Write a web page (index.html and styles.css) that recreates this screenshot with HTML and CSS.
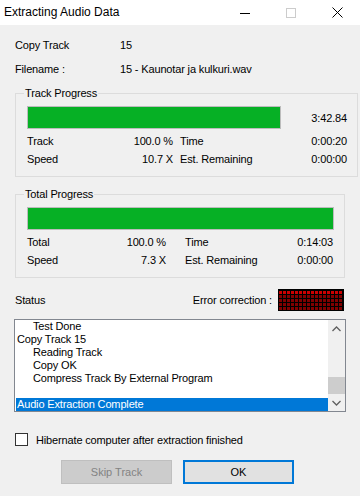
FILE: index.html
```html
<!DOCTYPE html>
<html lang="en">
<head>
    <meta charset="UTF-8">
    <meta name="viewport" content="width=device-width, initial-scale=1.0">
    <title>Extracting Audio Data</title>
    <link rel="stylesheet" href="styles.css">
</head>
<body>

    <div class="titlebar">
        <div class="title">Extracting Audio Data</div>
        <div class="controls">
            <div class="ctl"><svg width="10" height="10" viewBox="0 0 10 10"><line x1="0" y1="5.5" x2="10" y2="5.5" stroke="#000" stroke-width="1"/></svg></div>
            <div class="ctl"><svg width="10" height="10" viewBox="0 0 10 10"><rect x="0.5" y="0.5" width="9" height="9" fill="none" stroke="#cccccc" stroke-width="1"/></svg></div>
            <div class="ctl"><svg width="11" height="11" viewBox="0 0 11 11"><path d="M0.5 0.5 L10.5 10.5 M10.5 0.5 L0.5 10.5" stroke="#000" stroke-width="1"/></svg></div>
        </div>
    </div>

    <div class="dialog">
        <div class="info">
            <div class="info-row"><span class="info-label">Copy Track</span><span>15</span></div>
            <div class="info-row"><span class="info-label">Filename :</span><span>15 - Kaunotar ja kulkuri.wav</span></div>
        </div>

        <fieldset class="group">
            <legend>Track Progress</legend>
            <div class="bar-row">
                <div class="bar short"><div class="fill" style="width: 100%;"></div></div>
                <div class="bar-time">3:42.84</div>
            </div>
            <div class="stats">
                <span>Track</span><span class="num">100.0 %</span><span class="lbl2">Time</span><span class="num">0:00:20</span>
                <span>Speed</span><span class="num">10.7 X</span><span class="lbl2">Est. Remaining</span><span class="num">0:00:00</span>
            </div>
        </fieldset>

        <fieldset class="group second">
            <legend>Total Progress</legend>
            <div class="bar-row">
                <div class="bar"><div class="fill" style="width: 100%;"></div></div>
            </div>
            <div class="stats wide">
                <span>Total</span><span class="num">100.0 %</span><span class="lbl2">Time</span><span class="num">0:14:03</span>
                <span>Speed</span><span class="num">7.3 X</span><span class="lbl2">Est. Remaining</span><span class="num">0:00:00</span>
            </div>
        </fieldset>

        <div class="status-row">
            <span>Status</span>
            <div class="err">
                <span>Error correction :</span>
                <div class="leds" id="leds"></div>
            </div>
        </div>

        <div class="listbox">
            <div class="lines">
                <div class="line ind">Test Done</div>
                <div class="line">Copy Track 15</div>
                <div class="line ind">Reading Track</div>
                <div class="line ind">Copy OK</div>
                <div class="line ind">Compress Track By External Program</div>
                <div class="line"></div>
                <div class="line selected">Audio Extraction Complete</div>
            </div>
            <div class="scrollbar">
                <div class="arrow"><svg width="9" height="6" viewBox="0 0 9 6"><polyline points="0.5,5 4.5,1 8.5,5" fill="none" stroke="#606060" stroke-width="1.3"/></svg></div>
                <div class="track"><div class="thumb"></div></div>
                <div class="arrow"><svg width="9" height="6" viewBox="0 0 9 6"><polyline points="0.5,1 4.5,5 8.5,1" fill="none" stroke="#606060" stroke-width="1.3"/></svg></div>
            </div>
        </div>

        <label class="check">
            <span class="box"></span>
            <span>Hibernate computer after extraction finished</span>
        </label>

        <div class="buttons">
            <button class="btn disabled">Skip Track</button>
            <button class="btn default">OK</button>
        </div>
    </div>

    <script>
        // error correction meter: 16 x 5 cells, top row lit
        var leds = document.getElementById('leds');
        for (var r = 0; r < 5; r++) {
            for (var c = 0; c < 16; c++) {
                var cell = document.createElement('div');
                cell.className = r === 0 ? 'led on' : 'led';
                leds.appendChild(cell);
            }
        }
    </script>
</body>
</html>
```

FILE: styles.css
```css
body {
    margin: 0;
    width: 360px;
    height: 496px;
    background-color: #f0f0f0;
    font-family: "Liberation Sans", Arial, sans-serif;
    font-size: 11px;
    letter-spacing: -0.15px;
    color: #000;
    overflow: hidden;
}
.titlebar {
    height: 25px;
    background-color: #fff;
    display: flex;
    justify-content: space-between;
    align-items: center;
}
.title {
    font-size: 12px;
    letter-spacing: 0;
    padding-left: 4px;
    padding-bottom: 1px;
}
.controls {
    display: flex;
    height: 25px;
}
.ctl {
    width: 46px;
    display: flex;
    align-items: center;
    justify-content: center;
}
.ctl svg {
    display: block;
}
.dialog {
    padding-top: 8px;
}
.info {
    padding-left: 15px;
}
.info-row {
    height: 24px;
    line-height: 24px;
    display: flex;
}
.info-label {
    width: 105px;
}
.group {
    margin: 6px 15px 0 15px;
    padding: 6px 10px 8px 11px;
    border: 1px solid #dcdcdc;
}
.group.second {
    margin-top: 11px;
}
.group legend {
    padding: 0 1px;
    margin-left: -3px;
    line-height: 13px;
}
.bar-row {
    display: flex;
    align-items: center;
    height: 23px;
}
.bar {
    flex: 1;
    height: 23px;
    box-sizing: border-box;
    border: 1px solid #bcbcbc;
    background-color: #e6e6e6;
}
.bar.short {
    flex: none;
    width: 254px;
}
.fill {
    height: 100%;
    background-color: #06b025;
}
.bar-time {
    flex: 1;
    text-align: right;
}
.stats {
    margin-top: 3px;
    display: grid;
    grid-template-columns: 79px 60px 100px 60px;
    column-gap: 7px;
    line-height: 18px;
    white-space: nowrap;
}
.stats.wide {
    grid-template-columns: 79px 60px 107px 60px;
    column-gap: 0;
}
.stats.wide .lbl2 {
    padding-left: 19px;
}
.stats .num {
    text-align: right;
}
.status-row {
    margin: 11px 16px 0 15px;
    height: 22px;
    display: flex;
    justify-content: space-between;
    align-items: center;
}
.err {
    display: flex;
    align-items: center;
    gap: 6px;
}
.leds {
    display: grid;
    grid-template-columns: repeat(16, 3px);
    grid-auto-rows: 3px;
    gap: 1px;
    padding: 2px 2px 1px 1px;
    background-color: #000;
}
.led {
    background-color: #800000;
}
.led.on {
    background-color: #cc0000;
}
.listbox {
    margin: 8px 14px 0 14px;
    height: 93px;
    box-sizing: border-box;
    border: 1px solid #828790;
    background-color: #fff;
    display: flex;
}
.lines {
    flex: 1;
    padding-left: 1px;
}
.line {
    height: 13px;
    line-height: 13px;
    padding-left: 1px;
    white-space: nowrap;
}
.line.ind {
    padding-left: 17px;
}
.line.selected {
    background-color: #0078d7;
    color: #fff;
}
.scrollbar {
    width: 17px;
    background-color: #f0f0f0;
    display: flex;
    flex-direction: column;
}
.arrow {
    height: 17px;
    display: flex;
    align-items: center;
    justify-content: center;
}
.arrow svg {
    display: block;
}
.track {
    flex: 1;
    display: flex;
    flex-direction: column;
    justify-content: flex-end;
}
.thumb {
    height: 17px;
    background-color: #cdcdcd;
}
.check {
    margin: 21px 0 0 15px;
    display: flex;
    align-items: center;
    gap: 8px;
    height: 13px;
}
.box {
    width: 13px;
    height: 13px;
    box-sizing: border-box;
    border: 1px solid #333;
    background-color: #fff;
}
.buttons {
    margin-top: 14px;
    padding-left: 61px;
    display: flex;
    gap: 11px;
}
.btn {
    width: 111px;
    height: 24px;
    font-family: "Liberation Sans", Arial, sans-serif;
    font-size: 11px;
    padding: 0;
    box-sizing: border-box;
}
.btn.disabled {
    background-color: #cccccc;
    border: 1px solid #bfbfbf;
    color: #838383;
}
.btn.default {
    background-color: #e1e1e1;
    border: 2px solid #0078d7;
    color: #000;
}
```
